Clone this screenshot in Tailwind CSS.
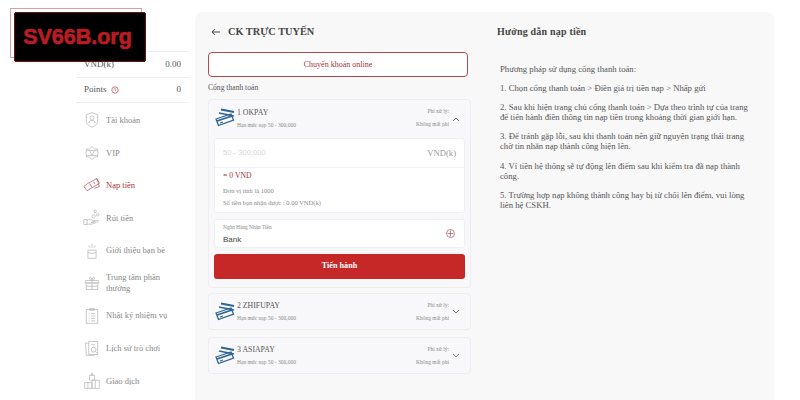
<!DOCTYPE html>
<html lang="en">
<head>
    <meta charset="UTF-8">
    <title>CK trực tuyến</title>
    <script src="https://cdn.jsdelivr.net/npm/@tailwindcss/browser@4"></script>
</head>
<body>
    <div class="relative w-[800px] h-[400px] overflow-hidden bg-white flex font-['Liberation_Serif',serif] text-[#555]">
        <!-- logo overlay -->
        <div class="absolute left-[10px] top-[8px] w-[132px] h-[50px] border border-[#d9a0a0]"></div>
        <div class="absolute left-[14px] top-[12px] w-[132px] h-[50px] bg-black border border-[#6b1010] rounded-[2px] flex items-center justify-center pr-[5px]">
            <span class="font-['Liberation_Sans',sans-serif] font-bold text-[21.500px] text-[#b81c24] [-webkit-text-stroke:0.7px_#b81c24]">SV66B.org</span>
        </div>

        <!-- sidebar -->
        <aside class="w-[195px] pl-[76px] pr-[6px] pt-[51px] shrink-0">
            <div class="h-[27px] border-t border-b border-[#eeeeee] flex items-center justify-between px-[8px] text-[9px]"><span>VND(k)</span><span>0.00</span></div>
            <div class="h-[25px] border-b border-[#eeeeee] flex items-center justify-between px-[8px] text-[9px]">
                <span class="flex items-center gap-[4px]">Points
                    <svg width="8" height="8" viewBox="0 0 10 10" fill="none" stroke="#c0575c"><circle cx="5" cy="5" r="4"/><path d="M5 2.500V5.500L6.500 6.500"/></svg>
                </span><span>0</span>
            </div>
            <nav class="text-[8.500px] text-[#888]">
                <a class="h-[32.600px] mt-[1px] flex items-center gap-[5px] pl-[7px]">
                    <svg class="w-[18px] h-[18px] shrink-0" viewBox="0 0 22 22" fill="none" stroke="#bbb" stroke-width="1"><path d="M11 2l7 2.500v8c0 3.500-3.500 6-7 7.500-3.500-1.500-7-4-7-7.500v-8z"/><circle cx="11" cy="8.500" r="2.500"/><path d="M7 15c.5-2.500 2-3.500 4-3.500s3.500 1 4 3.500"/></svg>
                    Tài khoản</a>
                <a class="h-[32.600px] flex items-center gap-[5px] pl-[7px]">
                    <svg class="w-[18px] h-[18px] shrink-0" viewBox="0 0 22 22" fill="none" stroke="#bbb" stroke-width="1"><path d="M11 3l3 3h4v4l1 1-1 1v4h-4l-3 3-3-3H4v-4l-1-1 1-1V6h4z"/><path d="M4 8h14M4 14h14M8 8l3 6 3-6"/></svg>
                    VIP</a>
                <a class="h-[32.600px] flex items-center gap-[5px] pl-[7px] text-[#a8323a]">
                    <svg class="w-[18px] h-[18px] shrink-0" viewBox="0 0 22 22" fill="none" stroke="#c0646a" stroke-width="1"><path d="M1 13l5-4 11-6 3 6-10 6-5 3z"/><path d="M8 9l3 5M13 7l1.500 2.500M17 3l3 10-6 2"/></svg>
                    Nạp tiền</a>
                <a class="h-[32.600px] flex items-center gap-[5px] pl-[7px]">
                    <svg class="w-[18px] h-[18px] shrink-0" viewBox="0 0 22 22" fill="none" stroke="#bbb" stroke-width="1"><path d="M1 13h4v6H1zM5 14c3-2 5-1 7 0h2c1 0 1 2 0 2l-4 .5 8-3c1.500 0 1 1.500 0 2l-7 3H5"/><circle cx="13" cy="9" r="2"/><circle cx="18" cy="7" r="1.500"/><circle cx="15" cy="3" r="1.500"/></svg>
                    Rút tiền</a>
                <a class="h-[32.600px] flex items-center gap-[5px] pl-[7px]">
                    <svg class="w-[18px] h-[18px] shrink-0" viewBox="0 0 22 22" fill="none" stroke="#bbb" stroke-width="1"><path d="M6 10h10v10H6zM6 13c3 1 7 1 10 0M11 2v5M7 4l1.500 3M15 4l-1.500 3"/></svg>
                    Giới thiệu bạn bè</a>
                <a class="h-[32.600px] flex items-center gap-[5px] pl-[7px] leading-[11px]">
                    <svg class="w-[18px] h-[18px] shrink-0" viewBox="0 0 22 22" fill="none" stroke="#bbb" stroke-width="1"><path d="M3 8h16v3H3zM4 11h14v8H4zM11 8v11M4 15h14M11 8C8 8 7 4 9 4s2 4 2 4 0-4 2-4 1 4-2 4"/></svg>
                    <span>Trung tâm phần<br>thưởng</span></a>
                <a class="h-[32.600px] flex items-center gap-[5px] pl-[7px]">
                    <svg class="w-[18px] h-[18px] shrink-0" viewBox="0 0 22 22" fill="none" stroke="#bbb" stroke-width="1"><path d="M4 3h14v17H4zM8 2h6v2H8zM7 8h1M10 8h5M7 11h1M10 11h5M7 14h1M10 14h5M7 17h1M10 17h5"/></svg>
                    Nhật ký nhiệm vụ</a>
                <a class="h-[32.600px] flex items-center gap-[5px] pl-[7px]">
                    <svg class="w-[18px] h-[18px] shrink-0" viewBox="0 0 22 22" fill="none" stroke="#bbb" stroke-width="1"><path d="M7 3h11v16H7zM7 5H3l1 15h10"/><circle cx="13" cy="13" r="3"/><path d="M10 7h5M15 15l3 3"/></svg>
                    Lịch sử trò chơi</a>
                <a class="h-[32.600px] flex items-center gap-[5px] pl-[7px]">
                    <svg class="w-[18px] h-[18px] shrink-0" viewBox="0 0 22 22" fill="none" stroke="#bbb" stroke-width="1"><path d="M2 13h9v7H2zM11 10h9v10h-9zM6 13v7M15 10v10M8 4h6v6H8zM10 2h2v2h-2z"/></svg>
                    Giao dịch</a>
            </nav>
        </aside>

        <!-- main panel -->
        <main class="mt-[12px] w-[579px] h-[400px] bg-[#f8f8f9] rounded-t-[8px] flex">
            <section class="w-[263px] ml-[13px] shrink-0">
                <div class="h-[40px] flex items-center gap-[11px] text-[#444]">
                    <svg class="ml-[3px]" width="9" height="8" viewBox="0 0 9 8" fill="none" stroke="#444"><path d="M9 4H1M4 1L1 4l3 3"/></svg>
                    <h1 class="font-bold text-[10.300px] -ml-[3px]">CK TRỰC TUYẾN</h1>
                </div>
                <div class="w-[260px] h-[25px] bg-white border border-[#b5484e] rounded-[4px] flex items-center justify-center text-[8px] text-[#a8323a]">Chuyển khoản online</div>
                <p class="text-[7.600px] mt-[5px] mb-[6px] leading-[11px]">Cổng thanh toán</p>

                <div class="bg-[#f8f8fa] border border-[#eeeef1] rounded-[4px] px-[5px] pb-[8px]">
                    <div class="h-[38px] flex items-center pl-[1px] pr-[5px]">
                        <svg class="w-[20px] h-[19px] shrink-0 -mt-[3px]" viewBox="0 0 20 19" fill="none" stroke="#2f6592" stroke-width="1.300"><path d="M6 1.500l13 2.500" stroke-width="2"/><path d="M4 5l15 3"/><path d="M1 11l15-5 2.500 6-15 5.500z"/><path d="M2 13l15-5" stroke-width="1.800"/><path d="M5 15l3-1"/></svg>
                        <div class="ml-[2px] flex-1 pb-[1px]">
                            <div class="text-[7.800px] leading-[12px] text-[#555]">1 OKPAY</div>
                            <div class="text-[5.500px] leading-[9px] mt-[1.500px] text-[#888]">Hạn mức nạp 50 - 300,000</div>
                        </div>
                        <div class="text-right text-[5.500px] leading-[13px] text-[#888] pb-[2px]">Phí xử lý:<br>Không mất phí</div>
                        <svg class="ml-[3px]" width="8" height="5" viewBox="0 0 8 5" fill="none" stroke="#777"><path d="M1 4l3-3 3 3"/></svg>
                    </div>
                    <div class="bg-white border border-[#f0f0f3] rounded-[3px]">
                        <div class="h-[29px] border-b border-[#f2f2f4] flex items-center justify-between px-[8px] text-[8.600px]"><span class="text-[#d5d5d5] font-['Liberation_Sans',sans-serif] text-[7.600px]">50 - 300,000</span><span class="text-[#999]">VND(k)</span></div>
                        <div class="px-[8px] pt-[1px] pb-[3px]">
                            <div class="text-[7.700px] leading-[14px] text-[#a8323a]">= 0 VND</div>
                            <div class="text-[6.500px] leading-[12px] mt-[2px] text-[#888]">Đơn vị tính là 1000</div>
                            <div class="text-[6.500px] leading-[12px] text-[#888]">Số tiền bạn nhận được : 0.00 VND(k)</div>
                        </div>
                    </div>
                    <div class="bg-white border border-[#f0f0f3] rounded-[3px] mt-[6px] h-[29px] flex items-center justify-between pl-[8px] pr-[9px]">
                        <div>
                            <div class="text-[5.400px] leading-[8px] text-[#888]">Ngân Hàng Nhận Tiền</div>
                            <div class="text-[8px] leading-[10px] mt-[4px] text-[#444] font-['Liberation_Sans',sans-serif]">Bank</div>
                        </div>
                        <svg width="9" height="9" viewBox="0 0 9 9" fill="none" stroke="#b5626a" stroke-width="0.8"><circle cx="4.500" cy="4.500" r="4"/><path d="M4.500 1.500v6M1.500 4.500h6"/></svg>
                    </div>
                    <button class="w-full h-[25px] mt-[6px] bg-[#c62828] rounded-[3px] text-white text-[8.200px] font-bold">Tiến hành</button>
                </div>

                <div class="mt-[5px] h-[37px] bg-[#f8f8fa] border border-[#eeeef1] rounded-[4px] flex items-center pl-[6px] pr-[10px]">
                    <svg class="w-[20px] h-[19px] shrink-0" viewBox="0 0 20 19" fill="none" stroke="#2f6592" stroke-width="1.300"><path d="M6 1.500l13 2.500" stroke-width="2"/><path d="M4 5l15 3"/><path d="M1 11l15-5 2.500 6-15 5.500z"/><path d="M2 13l15-5" stroke-width="1.800"/><path d="M5 15l3-1"/></svg>
                    <div class="ml-[2px] flex-1">
                        <div class="text-[7.800px] leading-[12px]">2 ZHIFUPAY</div>
                        <div class="text-[5.500px] leading-[9px] mt-[1.500px] text-[#888]">Hạn mức nạp 50 - 300,000</div>
                    </div>
                    <div class="text-right text-[5.500px] leading-[13px] text-[#888]">Phí xử lý:<br>Không mất phí</div>
                    <svg class="ml-[3px]" width="8" height="5" viewBox="0 0 8 5" fill="none" stroke="#777"><path d="M1 1l3 3 3-3"/></svg>
                </div>
                <div class="mt-[7px] h-[37px] bg-[#f8f8fa] border border-[#eeeef1] rounded-[4px] flex items-center pl-[6px] pr-[10px]">
                    <svg class="w-[20px] h-[19px] shrink-0" viewBox="0 0 20 19" fill="none" stroke="#2f6592" stroke-width="1.300"><path d="M6 1.500l13 2.500" stroke-width="2"/><path d="M4 5l15 3"/><path d="M1 11l15-5 2.500 6-15 5.500z"/><path d="M2 13l15-5" stroke-width="1.800"/><path d="M5 15l3-1"/></svg>
                    <div class="ml-[2px] flex-1">
                        <div class="text-[7.800px] leading-[12px]">3 ASIAPAY</div>
                        <div class="text-[5.500px] leading-[9px] mt-[1.500px] text-[#888]">Hạn mức nạp 50 - 300,000</div>
                    </div>
                    <div class="text-right text-[5.500px] leading-[13px] text-[#888]">Phí xử lý:<br>Không mất phí</div>
                    <svg class="ml-[3px]" width="8" height="5" viewBox="0 0 8 5" fill="none" stroke="#777"><path d="M1 1l3 3 3-3"/></svg>
                </div>
            </section>

            <section class="ml-[26px] w-[265px]">
                <h2 class="font-bold text-[10px] text-[#444] leading-[13px] pt-[13px] tracking-[0.2px]">Hướng dẫn nạp tiền</h2>
                <div class="mt-[25.500px] pl-[3px] text-[8.700px] leading-[10px] text-[#555] space-y-[9.300px]">
                    <p>Phương pháp sử dụng cổng thanh toán:</p>
                    <p>1. Chọn cổng thanh toán &gt; Điền giá trị tiền nạp &gt; Nhấp gửi</p>
                    <p>2. Sau khi hiện trang chủ cổng thanh toán &gt; Dựa theo trình tự của trang<br>để tiến hành điền thông tin nạp tiền trong khoảng thời gian giới hạn.</p>
                    <p>3. Để tránh gặp lỗi, sau khi thanh toán nên giữ nguyên trạng thái trang<br>chờ tin nhắn nạp thành công hiện lên.</p>
                    <p>4. Ví tiền hệ thống sẽ tự động lên điểm sau khi kiểm tra đã nạp thành<br>công.</p>
                    <p>5. Trường hợp nạp không thành công hay bị từ chối lên điểm, vui lòng<br>liên hệ CSKH.</p>
                </div>
            </section>
        </main>
    </div>
</body>
</html>
